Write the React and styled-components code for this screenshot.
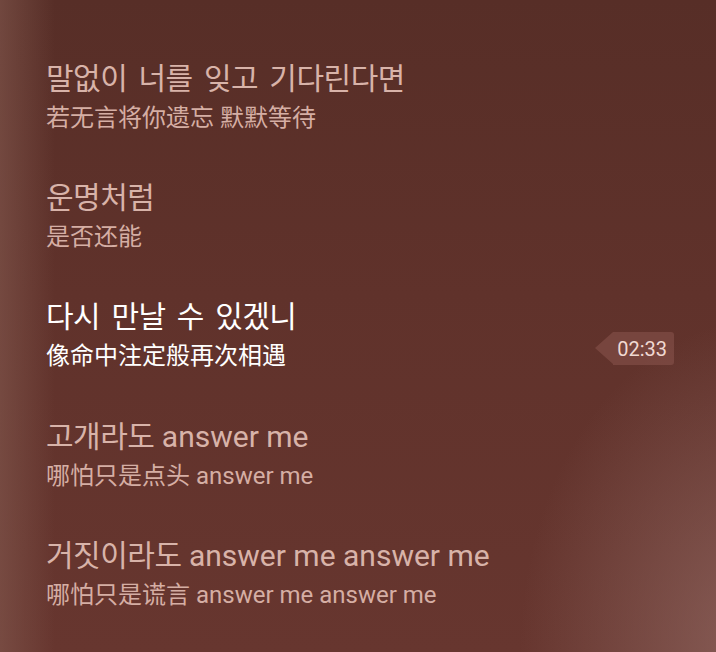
import React from 'react'
import styled, {createGlobalStyle} from 'styled-components'

const Global = createGlobalStyle`
	html, body { margin: 0; padding: 0; }
	body { background: #5a2f28; }
`

const Screen = styled.div`
	position: relative;
	width: 716px;
	height: 652px;
	overflow: hidden;
	box-sizing: border-box;
	padding: 56px 42px 0 46px;
	font-family: Roboto, "Noto Sans CJK KR", "Noto Sans CJK SC", sans-serif;
	background:
		radial-gradient(ellipse 240px 330px at 760px 650px, rgba(150, 110, 104, 0.7), rgba(150, 110, 104, 0) 100%),
		linear-gradient(90deg, rgba(130, 88, 78, 0.6) 0px, rgba(130, 88, 78, 0) 55px),
		linear-gradient(180deg, #572e27 0%, #60322b 45%, #67362f 100%);
`

const List = styled.div`
	display: flex;
	flex-direction: column;
	gap: 39.2px;
`

const Group = styled.div`
	display: flex;
	align-items: flex-end;
	justify-content: space-between;
`

const Texts = styled.div`
	display: flex;
	flex-direction: column;
	gap: 4px;
`

const Main = styled.div`
	height: 40px;
	font-size: 30px;
	line-height: 40px;
	white-space: nowrap;
	color: ${p => p.$active ? '#ffffff' : '#d8b3a9'};
`

const Sub = styled.div`
	height: 36px;
	font-size: 24px;
	line-height: 36px;
	white-space: nowrap;
	font-family: Roboto, "Noto Sans CJK SC", sans-serif;
	color: ${p => p.$active ? '#ffffff' : '#d5aea4'};
`

const Hangul = styled.span`
	font-family: "Noto Sans CJK KR", sans-serif;
	letter-spacing: -0.5px;
	word-spacing: 5px;
`

const Badge = styled.div`
	position: relative;
	margin-bottom: 9px;
	height: 33px;
	padding: 0 7px 0 4px;
	display: flex;
	align-items: center;
	font-size: 20px;
	color: #f0d9d2;
	background: rgba(150, 95, 88, 0.42);
	border-radius: 0 3px 3px 0;
	&::before {
		content: '';
		position: absolute;
		left: -18px;
		top: 0;
		border-style: solid;
		border-width: 16.5px 18px 16.5px 0;
		border-color: transparent rgba(150, 95, 88, 0.42) transparent transparent;
	}
`

const lyrics = [
	{ko: '말없이 너를 잊고 기다린다면', zh: '若无言将你遗忘 默默等待'},
	{ko: '운명처럼', zh: '是否还能'},
	{ko: '다시 만날 수 있겠니', zh: '像命中注定般再次相遇', active: true, time: '02:33'},
	{ko: '고개라도 answer me', zh: '哪怕只是点头 answer me'},
	{ko: '거짓이라도 answer me answer me', zh: '哪怕只是谎言 answer me answer me'},
]

// wrap the hangul runs (with the spaces between them) so they can be spaced apart from the latin
const split = (text) =>
	text.split(/([\uac00-\ud7a3](?:[\uac00-\ud7a3 ]*[\uac00-\ud7a3])?)/).map((part, i) =>
		/[\uac00-\ud7a3]/.test(part) ? <Hangul key={i}>{part}</Hangul> : part
	)

export default function App() {
	return (
		<Screen>
			<Global />
			<List>
				{lyrics.map((l, i) => (
					<Group key={i}>
						<Texts>
							<Main $active={l.active}>{split(l.ko)}</Main>
							<Sub $active={l.active}>{l.zh}</Sub>
						</Texts>
						{l.time && <Badge>{l.time}</Badge>}
					</Group>
				))}
			</List>
		</Screen>
	)
}
